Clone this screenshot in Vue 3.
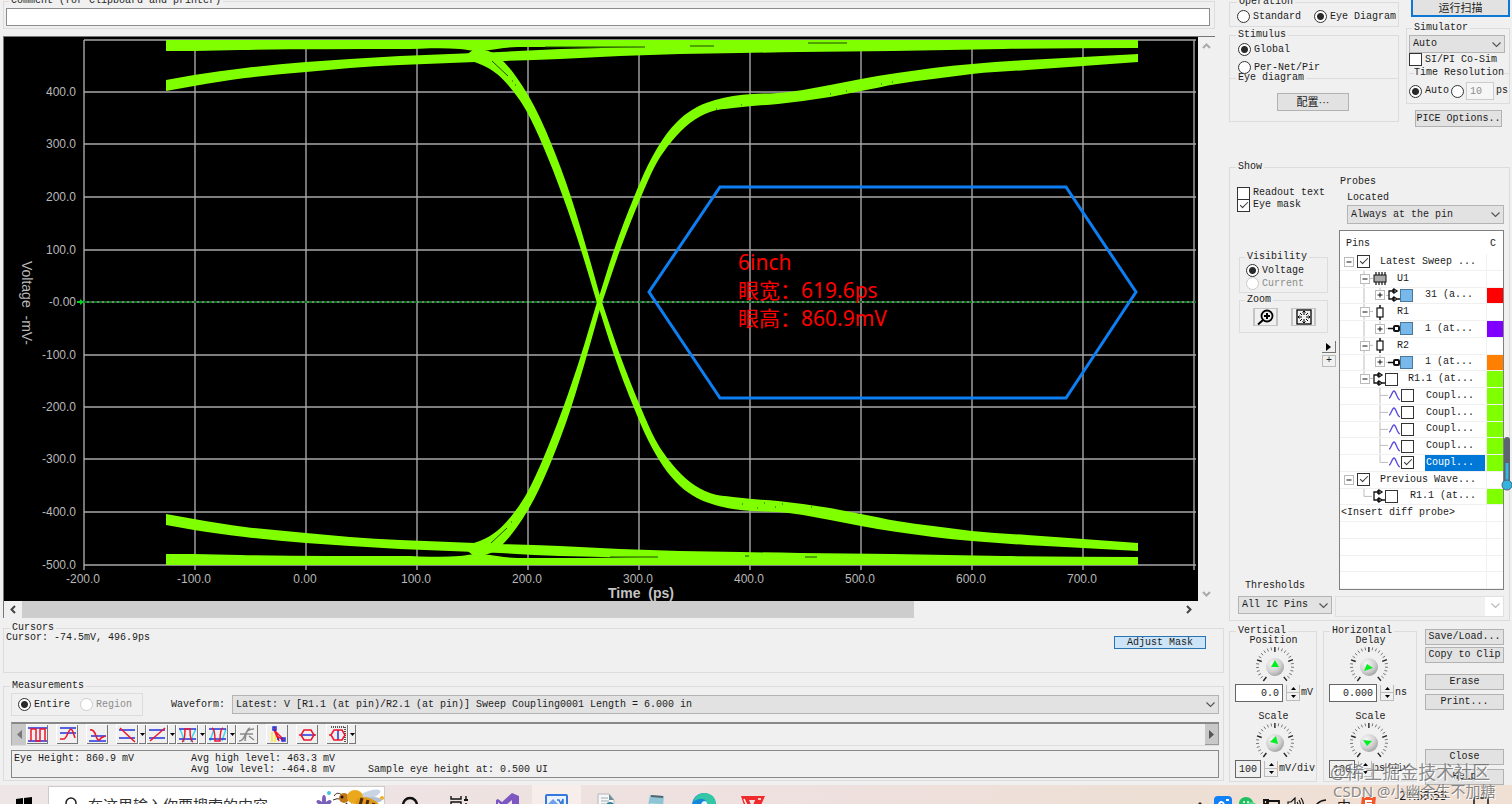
<script setup>
import { ref } from 'vue'

const comment = ref('')
const resolution = ref('10')
const vPos = ref('0.0')
const vScale = ref('100')
const hDelay = ref('0.000')
const hScale = ref('100')

/* ---------- plot ---------- */
const gridX = Array.from({ length: 11 }, (_, i) => 84 + i * 111)
const gridY = [40, 92, 144, 197, 250, 302, 355, 407, 459, 512, 565]
const xLabels = ['-200.0', '-100.0', '0.00', '100.0', '200.0', '300.0', '400.0', '500.0', '600.0', '700.0']
const yLabels = ['400.0', '300.0', '200.0', '100.0', '-0.00', '-100.0', '-200.0', '-300.0', '-400.0', '-500.0']

const mirror = (pts) => pts.map(([x, y]) => [x, 605 - y])

/* cubic Hermite curve through the points, drawn as Bezier segments */
function smooth(pts) {
  const last = pts.length - 1
  const sec = pts.slice(1).map((p, i) => (p[1] - pts[i][1]) / (p[0] - pts[i][0]))
  const slope = pts.map((p, i) => {
    if (i === 0) return sec[0]
    if (i === last) return sec[last - 1]
    const a = Math.abs(p[0] - pts[i - 1][0])
    const b = Math.abs(pts[i + 1][0] - p[0])
    return (sec[i - 1] * b + sec[i] * a) / (a + b)
  })
  let d = ''
  for (let i = 0; i < last; i++) {
    const [x1, y1] = pts[i]
    const [x2, y2] = pts[i + 1]
    const h = (x2 - x1) / 3
    const c = [x1 + h, y1 + h * slope[i], x2 - h, y2 - h * slope[i + 1]].map((n) => n.toFixed(1))
    d += ` C${c[0]} ${c[1]} ${c[2]} ${c[3]} ${x2} ${y2}`
  }
  return d
}
function band(upper, lower) {
  const back = [...lower].reverse()
  return `M${upper[0]}${smooth(upper)} L${back[0]}${smooth(back)} Z`
}

const railUp = [[166, 40], [1138, 40]]
const railLow = [[166, 51], [194, 51], [240, 50], [400, 49], [460, 49], [478, 51], [490, 50], [504, 48], [545, 47], [645, 48], [1000, 48], [1138, 48]]
const settleUp = [[166, 80], [194, 75], [245, 68], [306, 62], [350, 59], [400, 56], [475, 53], [500, 52], [560, 49], [603, 48], [680, 47], [1138, 46]]
const settleLow = [[166, 91], [194, 86], [245, 78], [306, 72], [350, 68], [400, 65], [475, 62], [500, 61], [560, 59], [620, 56], [680, 54], [740, 53], [800, 52], [893, 51], [1003, 49], [1138, 48]]
const fallUp = [[474, 49], [484, 50], [493, 53], [504, 62], [517, 78], [528, 95], [541, 120], [551, 143], [571, 197], [587, 250], [602, 303]]
const fallLow = [[460, 60], [470, 61], [482, 65], [497, 74], [513, 91], [527, 112], [543, 146], [563, 197], [581, 250], [597, 303]]
const riseUp = [[597, 303], [614, 250], [634, 197], [648, 165], [663, 139], [680, 119], [697, 107], [715, 100], [733, 96], [752, 94], [778, 93], [803, 90], [830, 85], [861, 79], [897, 73], [933, 68], [972, 64], [1027, 60], [1083, 57], [1138, 54]]
const riseLow = [[602, 303], [620, 250], [641, 197], [655, 166], [672, 141], [690, 123], [710, 112], [733, 108], [752, 106], [778, 104], [803, 101], [830, 97], [861, 91], [897, 84], [933, 79], [972, 74], [1027, 70], [1083, 66], [1138, 62]]
const pairs = [[railUp, railLow], [settleUp, settleLow], [fallUp, fallLow], [riseUp, riseLow]]
const traces = pairs.flatMap(([u, l]) => [band(u, l), band(mirror(u), mirror(l))])

/* ---------- knobs ---------- */
const ticks = Array.from({ length: 25 }, (_, i) => {
  const a = ((-232 + i * 11.8) * Math.PI) / 180
  const major = i % 6 === 0
  const r1 = major ? 14 : 16
  return [20 + Math.cos(a) * r1, 20 + Math.sin(a) * r1, 20 + Math.cos(a) * 19, 20 + Math.sin(a) * 19, major]
})

/* ---------- probe tree ---------- */
const rows = [
  { lvl: 0, exp: '-', box: 'on', text: 'Latest Sweep ...' },
  { lvl: 1, exp: '-', icon: 'chip', text: 'U1', g: 'M24 0V17 M30 8H33' },
  { lvl: 2, exp: '+', icon: 'buf', box: 'fill', text: '31 (a...', color: '#ff0000', g: 'M24 0V17 M40 0V3 M46 8H49' },
  { lvl: 1, exp: '-', icon: 'res', text: 'R1', g: 'M24 0V17 M30 8H33' },
  { lvl: 2, exp: '+', icon: 'pin', box: 'fill', text: '1 (at...', color: '#8000ff', g: 'M24 0V17 M40 0V3 M46 8H49' },
  { lvl: 1, exp: '-', icon: 'res', text: 'R2', g: 'M24 0V17 M30 8H33' },
  { lvl: 2, exp: '+', icon: 'pin', box: 'fill', text: '1 (at...', color: '#ff8000', g: 'M24 0V17 M40 0V3 M46 8H49' },
  { lvl: 1, exp: '-', icon: 'buf', box: 'off', text: 'R1.1 (at...', color: '#80ff00', g: 'M24 0V4 M30 8H33' },
  ...[0, 1, 2, 3].map(() => ({ lvl: 3, icon: 'wave', box: 'off', text: 'Coupl...', color: '#80ff00', g: 'M40 0V17 M40 8H48' })),
  { lvl: 3, icon: 'wave', box: 'on', text: 'Coupl...', color: '#80ff00', sel: true, g: 'M40 0V8 H48' },
  { lvl: 0, exp: '-', box: 'on', text: 'Previous Wave...' },
  { lvl: 4, icon: 'buf', box: 'off', text: 'R1.1 (at...', color: '#80ff00', g: 'M24 0V8 H32' },
  { lvl: 5, text: '<Insert diff probe>' },
  { lvl: 5, text: '' },
  { lvl: 5, text: '' },
  { lvl: 5, text: '' },
  { lvl: 5, text: '' },
]

/* ---------- measurement tools ---------- */
const B = '#2233dd'
const R = '#f0142c'
const C = '#35d8f5'
const G = '#8a8a8a'
const tools = [
  { name: 'Period', p: [['M0 3H19M0 16H19', B], ['M3 16V4H8V16H12V4H17V16', R]] },
  { name: 'Overshoot', p: [['M2 3H18M2 8H18', B], ['M2 14H6Q8 13 10 8Q13 1 15 7L17 13', R]], gap: true },
  { name: 'Undershoot', p: [['M3 11H18M1 16H18', B], ['M2 5Q6 4 8 11Q10 18 13 13L17 11', R]], gap: true },
  { name: 'Fall time', p: [['M1 5H17M1 13H17', B], ['M2 3L17 17', R]], drop: true, gap: true },
  { name: 'Rise time', p: [['M1 5H17M1 13H17', B], ['M2 16L17 3', R]], drop: true },
  { name: 'Positive pulse', p: [['M2 4Q5 10 6 17M18 4Q14 10 13 17', C], ['M1 4H18M1 14H18', B], ['M4 17Q7 16 7 4H12Q12 16 15 17', R]], drop: true },
  { name: 'Negative pulse', p: [['M2 16L6 4M14 16L18 4', C], ['M1 4H18M1 14H18', B], ['M4 3Q7 4 7 16H12Q12 4 15 3', R]], drop: true },
  { name: 'Crossing', p: [['M1 16Q5 16 7 10T16 4M2 9H15M7 16Q8 4 12 3M11 11L16 15', G]] },
  { name: 'Slope', p: [['M4 17V7M7 17L8 9', '#f5e830'], ['M6 2L11 16L6 5L16 15M9 11L16 16', R], ['M5 2H8V5H5ZM14 13H17V16H14ZM9 14H11', B]], gap: true },
  { name: 'Eye width', p: [['M3 10H17', B], ['M1 10H3L6 5H13L16 10L13 15H6L3 10M16 10H18', R]], gap: true },
  { name: 'Eye height', p: [['M3 2H17V17', '#222', '1 1'], ['M10 5V15', B], ['M1 10H3L6 5H14L17 10L14 15H6L3 10', R]], drop: true, gap: true },
]
</script>

<template>
  <div class="app">
    <main class="main">
      <!-- left side -->
      <section class="left">
        <fieldset class="comment">
          <legend><label for="comment">Comment (for Clipboard and printer)</label></legend>
          <input id="comment" v-model="comment" class="field" type="text" />
        </fieldset>

        <div class="frame">
          <div class="view">
            <svg class="plot" viewBox="4 37 1193 564" preserveAspectRatio="xMinYMin meet" role="img" aria-label="Eye diagram">
              <g stroke="#a8a8a8" stroke-width="1.4">
                <line v-for="x in gridX" :key="'x' + x" :x1="x" :x2="x" y1="40" y2="570" />
                <line v-for="y in gridY" :key="'y' + y" x1="84" x2="1196" :y1="y" :y2="y" />
              </g>
              <line x1="84" x2="1196" y1="302" y2="302" stroke="#0a7a1a" stroke-width="2" stroke-dasharray="3 2" />
              <path d="M77 301H80V299L84 302L80 305V303H77Z" fill="#00d020" />
              <path v-for="(d, i) in traces" :key="i" :d="d" fill="#80ff00" />
              <g stroke="#1d4a00" stroke-width="1" fill="none">
                <path d="M545 47H645M808 43H847M492 61L508 76M512 81h1M515 85h1" />
                <path d="M690 46H714M610 557H658M745 556h4M805 557H817M491 543L507 528M511 522h1" />
                <path d="M742 504h1M757 508h1M764 503h1M775 507h1M782 504h1M811 507h1M830 94h1M846 91h1M881 84h1M892 82h1M716 109h1M741 105h1" />
              </g>
              <polygon points="720,187 1066,187 1136,292 1066,398 720,398 649,292" fill="none" stroke="#0d7ff2" stroke-width="3" />
              <g class="tick">
                <text v-for="(t, i) in yLabels" :key="t" x="76" :y="gridY[i + 1] + 4" text-anchor="end">{{ t }}</text>
                <text v-for="(t, i) in xLabels" :key="t" :x="gridX[i] - 1" y="583" text-anchor="middle">{{ t }}</text>
              </g>
              <text class="axis" x="641" y="598" text-anchor="middle">Time&nbsp; (ps)</text>
              <text class="vaxis" transform="translate(22 303) rotate(90)" text-anchor="middle">Voltage&nbsp; -mV-</text>
              <g class="note">
                <text x="738" y="270">6inch</text>
                <text x="738" y="298">眼宽：619.6ps</text>
                <text x="738" y="326">眼高：860.9mV</text>
              </g>
            </svg>
            <div class="vscroll">
              <svg width="9" height="6" viewBox="0 0 9 6"><path d="M1 5L4.500 1.500L8 5" fill="none" stroke="#aaa" stroke-width="2" /></svg>
              <svg width="9" height="6" viewBox="0 0 9 6"><path d="M1 1L4.500 4.500L8 1" fill="none" stroke="#aaa" stroke-width="2" /></svg>
            </div>
          </div>
          <div class="hscroll">
            <button type="button" aria-label="Scroll left"><svg width="6" height="9" viewBox="0 0 6 9"><path d="M5 1L1.500 4.500L5 8" fill="none" stroke="#444" stroke-width="2" /></svg></button>
            <div class="track"><div class="thumb"></div></div>
            <button type="button" aria-label="Scroll right"><svg width="6" height="9" viewBox="0 0 6 9"><path d="M1 1L4.500 4.500L1 8" fill="none" stroke="#444" stroke-width="2" /></svg></button>
          </div>
        </div>

        <fieldset class="cursors">
          <legend>Cursors</legend>
          <output>Cursor: -74.5mV, 496.9ps</output>
          <button type="button" class="adjust">Adjust Mask</button>
        </fieldset>

        <fieldset class="measure">
          <legend>Measurements</legend>
          <div class="mrow">
            <div class="range">
              <label><input type="radio" name="range" checked /><span>Entire</span></label>
              <label class="dim"><input type="radio" name="range" disabled /><span>Region</span></label>
            </div>
            <label class="wlabel" for="wave">Waveform:</label>
            <span class="sel grow">
              <select id="wave"><option>Latest: V [R1.1 (at pin)/R2.1 (at pin)] Sweep Coupling0001 Length = 6.000 in</option></select>
              <svg width="9" height="6" viewBox="0 0 9 6"><path d="M.5 .5L4.500 4.500L8.500 .5" /></svg>
            </span>
          </div>
          <div class="tools">
            <button type="button" class="end" aria-label="Previous tools"><svg width="5" height="9" viewBox="0 0 5 9"><path d="M5 0V9L0 4.500Z" fill="#777" /></svg></button>
            <div v-for="t in tools" :key="t.name" class="tool" :class="{ gap: t.gap }">
              <button type="button" class="ticon" :aria-label="t.name">
                <svg width="19" height="19" viewBox="0 0 19 19"><path v-for="(q, i) in t.p" :key="i" :d="q[0]" :stroke="q[1]" :stroke-dasharray="q[2]" fill="none" stroke-width="1.500" /></svg>
              </button>
              <button v-if="t.drop" type="button" class="tdrop" :aria-label="t.name + ' options'"><svg width="5" height="3" viewBox="0 0 5 3"><path d="M0 0H5L2.500 3Z" /></svg></button>
            </div>
            <button type="button" class="end last" aria-label="More tools"><svg width="5" height="9" viewBox="0 0 5 9"><path d="M0 0V9L5 4.500Z" fill="#555" /></svg></button>
          </div>
          <div class="result">
            <span class="r1">Eye Height: 860.9 mV</span>
            <span class="r2">Avg high level: 463.3 mV<br />Avg low level: -464.8 mV</span>
            <span class="r3">Sample eye height at: 0.500 UI</span>
          </div>
        </fieldset>
      </section>

      <!-- right side -->
      <aside class="right">
        <div class="topgrid">
          <div class="stack">
            <fieldset class="oper">
              <legend>Operation</legend>
              <label><input type="radio" name="op" /><span>Standard</span></label>
              <label><input type="radio" name="op" checked /><span>Eye Diagram</span></label>
            </fieldset>
            <fieldset class="stim">
              <legend>Stimulus</legend>
              <label><input type="radio" name="stim" checked /><span>Global</span></label>
              <label><input type="radio" name="stim" /><span>Per-Net/Pir</span></label>
              <fieldset class="inner">
                <legend>Eye diagram</legend>
                <button type="button" class="btn conf">配置···</button>
              </fieldset>
            </fieldset>
          </div>
          <div class="stack">
            <button type="button" class="run">运行扫描</button>
            <fieldset class="sim">
              <legend>Simulator</legend>
              <span class="sel">
                <select aria-label="Simulator"><option>Auto</option></select>
                <svg width="9" height="6" viewBox="0 0 9 6"><path d="M.5 .5L4.500 4.500L8.500 .5" /></svg>
              </span>
              <label><input type="checkbox" /><span>SI/PI Co-Sim</span></label>
              <fieldset class="inner tres">
                <legend>Time Resolution</legend>
                <div class="resrow">
                  <label><input type="radio" name="res" checked /><span>Auto</span></label>
                  <input type="radio" name="res" aria-label="Fixed resolution" />
                  <input id="res" v-model="resolution" class="ps" type="text" disabled /><label for="res">ps</label>
                </div>
              </fieldset>
            </fieldset>
            <button type="button" class="btn pice">PICE Options..</button>
          </div>
        </div>

        <div class="showwrap">
          <fieldset class="show">
            <legend>Show</legend>
            <div class="showgrid">
              <div class="scol">
                <label><input type="checkbox" /><span>Readout text</span></label>
                <label><input type="checkbox" checked /><span>Eye mask</span></label>
                <fieldset class="vis">
                  <legend>Visibility</legend>
                  <label><input type="radio" name="vis" checked /><span>Voltage</span></label>
                  <label class="dim"><input type="radio" name="vis" disabled /><span>Current</span></label>
                </fieldset>
                <fieldset class="zoom">
                  <legend>Zoom</legend>
                  <div class="zrow">
                    <button type="button" aria-label="Zoom in">
                      <svg width="18" height="16" viewBox="0 0 18 16" fill="none" stroke="#000"><circle cx="10" cy="7" r="5.500" stroke-width="1.800" /><path d="M7 7H13M10 4V10M6 11L1 15.500" stroke-width="2" /></svg>
                    </button>
                    <button type="button" aria-label="Fit all">
                      <svg width="16" height="16" viewBox="0 0 16 16" fill="none" stroke="#000"><rect x="1" y="1" width="14" height="14" stroke-width="1.300" /><path d="M8 2V6M8 10V14M2 8H6M10 8H14M6.500 3.500L8 2L9.500 3.500M6.500 12.500L8 14L9.500 12.500M3.500 6.500L2 8L3.500 9.500M12.500 6.500L14 8L12.500 9.500M4 4L6 6M12 4L10 6M4 12L6 10M12 12L10 10" /></svg>
                    </button>
                  </div>
                </fieldset>
                <button type="button" class="mini" aria-label="Collapse"><svg width="5" height="8" viewBox="0 0 5 8"><path d="M0 0V8L5 4Z" /></svg></button>
                <button type="button" class="mini flat">+</button>
                <label class="thr" for="thr">Thresholds</label>
              </div>
              <div class="pcol">
                <span class="plabel">Probes</span>
                <label class="located" for="loc">Located</label>
                <span class="sel loc">
                  <select id="loc"><option>Always at the pin</option></select>
                  <svg width="9" height="6" viewBox="0 0 9 6"><path d="M.5 .5L4.500 4.500L8.500 .5" /></svg>
                </span>
                <div class="tree">
                  <div class="thead"><span>Pins</span><span>C</span></div>
                  <div v-for="(r, i) in rows" :key="i" class="trow" :class="'l' + r.lvl">
                    <svg v-if="r.g" class="guides" viewBox="0 0 60 17" preserveAspectRatio="none"><path :d="r.g" fill="none" stroke="#bbb" /></svg>
                    <button v-if="r.exp" type="button" class="exp" :aria-label="'Toggle ' + r.text">
                      <svg width="8" height="8" viewBox="0 0 8 8"><path :d="r.exp === '+' ? 'M1.500 4H6.500M4 1.500V6.500' : 'M1.500 4H6.500'" stroke="#111" /></svg>
                    </button>
                    <svg v-if="r.icon === 'chip'" class="ic" width="14" height="13" viewBox="0 0 14 13"><path d="M3 0V13M6 0V13M9 0V13M12 0V13" stroke="#111" stroke-width="1.200" /><rect x="1" y="3" width="12" height="7" fill="#aaa" stroke="#111" /></svg>
                    <svg v-else-if="r.icon === 'res'" class="ic" width="14" height="15" viewBox="0 0 14 15"><path d="M7 0V15" stroke="#111" stroke-width="1.500" /><rect x="4" y="3" width="6" height="9" fill="#fff" stroke="#111" stroke-width="1.200" /></svg>
                    <svg v-else-if="r.icon === 'pin'" class="ic" width="12" height="9" viewBox="0 0 12 9"><path d="M0 4.500H6" stroke="#111" stroke-width="1.500" /><rect x="6" y="2" width="5" height="5" rx="1" fill="#fff" stroke="#111" stroke-width="2" /></svg>
                    <svg v-else-if="r.icon === 'buf'" class="ic" width="12" height="14" viewBox="0 0 12 14" fill="none" stroke="#111" stroke-width="1.300"><path d="M5 3H1V11H5M6 1V5L9 3ZM6 9V13L9 11ZM9 11H12M5 1V5M5 9V13" /></svg>
                    <svg v-else-if="r.icon === 'wave'" class="ic" width="12" height="11" viewBox="0 0 12 11"><path d="M0 8C2 8 3 1 5 1S8 9 11 10" fill="none" stroke="#5548e0" stroke-width="1.300" /></svg>
                    <input v-if="r.box" type="checkbox" :checked="r.box === 'on'" :class="{ fill: r.box === 'fill' }" :aria-label="r.text" />
                    <span class="tt" :class="{ selected: r.sel }">{{ r.text }}</span>
                    <span class="swatch" :style="r.color ? { background: r.color } : null"></span>
                  </div>
                </div>
              </div>
            </div>
            <div class="thrrow">
              <span class="sel">
                <select id="thr"><option>All IC Pins</option></select>
                <svg width="9" height="6" viewBox="0 0 9 6"><path d="M.5 .5L4.500 4.500L8.500 .5" /></svg>
              </span>
              <span class="sel off">
                <select disabled aria-label="Threshold model"><option></option></select>
                <svg width="9" height="6" viewBox="0 0 9 6"><path d="M.5 .5L4.500 4.500L8.500 .5" /></svg>
              </span>
            </div>
          </fieldset>
        </div>

        <div class="bottom">
          <fieldset v-for="(k, n) in ['Vertical', 'Horizontal']" :key="k" class="dial">
            <legend>{{ k }}</legend>
            <template v-for="m in 2" :key="m">
              <label class="dname" :for="k + m">{{ m === 2 ? 'Scale' : n ? 'Delay' : 'Position' }}</label>
              <svg class="knob" width="40" height="38" viewBox="0 0 40 38">
                <defs>
                  <radialGradient :id="'kg' + n + m" cx=".35" cy=".3" r=".8"><stop offset="0" stop-color="#f6f6f6" /><stop offset=".6" stop-color="#cfcfcf" /><stop offset="1" stop-color="#999" /></radialGradient>
                </defs>
                <line v-for="(t, i) in ticks" :key="i" :x1="t[0]" :y1="t[1]" :x2="t[2]" :y2="t[3]" :stroke="t[4] ? '#222' : '#777'" :stroke-width="t[4] ? 1.4 : 1" />
                <circle cx="20" cy="21" r="9" :fill="`url(#kg${n}${m})`" />
                <path :d="n ? (m === 1 ? 'M18 18L24 22L15 25Z' : 'M14 18L23 19L18 24Z') : (m === 1 ? 'M20 14L24 21H16Z' : 'M21 14L23 22L15 20Z')" fill="#00f020" />
              </svg>
              <div class="num">
                <input v-if="!n && m === 1" :id="k + m" v-model="vPos" class="wide" type="text" />
                <input v-else-if="!n" :id="k + m" v-model="vScale" type="text" readonly />
                <input v-else-if="m === 1" :id="k + m" v-model="hDelay" class="wide" type="text" />
                <input v-else :id="k + m" v-model="hScale" type="text" readonly />
                <span class="spin">
                  <button type="button" aria-label="Increase"><svg width="5" height="3" viewBox="0 0 5 3"><path d="M0 3H5L2.500 0Z" /></svg></button>
                  <button type="button" aria-label="Decrease"><svg width="5" height="3" viewBox="0 0 5 3"><path d="M0 0H5L2.500 3Z" /></svg></button>
                </span>
                <span>{{ n ? (m === 1 ? 'ns' : 'ps/div') : (m === 1 ? 'mV' : 'mV/div') }}</span>
              </div>
            </template>
          </fieldset>
          <div class="actions">
            <button type="button" class="btn">Save/Load...</button>
            <button type="button" class="btn">Copy to Clip</button>
            <button type="button" class="btn sp1">Erase</button>
            <button type="button" class="btn sp2">Print...</button>
            <button type="button" class="btn sp3">Close</button>
            <button type="button" class="btn sp2">Help</button>
          </div>
        </div>
      </aside>
    </main>

    <!-- taskbar -->
    <footer class="taskbar">
      <div class="bar">
        <button type="button" class="start" aria-label="Start"><svg width="16" height="16" viewBox="0 0 16 16"><path d="M0 2L7 1V7.500H0ZM8 1L16 0V7.500H8ZM0 8.500H7V15L0 14ZM8 8.500H16V16L8 15Z" /></svg></button>
        <div class="search">
          <svg width="16" height="18" viewBox="0 0 16 18" fill="none" stroke="#222" stroke-width="1.500"><circle cx="7" cy="7" r="5" /><path d="M4 11L0 16" /></svg>
          <input type="text" placeholder="在这里输入你要搜索的内容" aria-label="Search" />
          <svg class="bee" width="70" height="36" viewBox="0 0 70 36">
            <g fill="#7860b8"><ellipse cx="10" cy="13" rx="2" ry="5" /><ellipse cx="6" cy="16" rx="4" ry="2" transform="rotate(35 6 16)" /><ellipse cx="14" cy="16" rx="4" ry="2" transform="rotate(-35 14 16)" /><circle cx="10" cy="20" r="5" /></g>
            <circle cx="15" cy="6" r="2" fill="#40c8d8" /><circle cx="68" cy="11" r="2" fill="#f0b020" />
            <ellipse cx="55" cy="8" rx="12" ry="4" fill="#c8d4e4" transform="rotate(-20 55 8)" />
            <ellipse cx="59" cy="13" rx="9" ry="3" fill="#b4bfd0" />
            <path d="M20 9Q23 4 28 8M19 13Q23 11 27 12" fill="none" stroke="#443322" />
            <ellipse cx="30" cy="11" rx="5" ry="5" fill="#c07818" /><ellipse cx="41" cy="10" rx="8" ry="7" fill="#eca81c" />
            <ellipse cx="54" cy="18" rx="13" ry="7" fill="#e09a18" transform="rotate(20 54 18)" />
            <path d="M48 11L45 22M54 13L51 25M60 16L57 27" stroke="#4c2a12" stroke-width="3" /><circle cx="28" cy="10" r="1.500" fill="#201008" />
            <path d="M33 16L29 21M38 17L35 22" stroke="#4c2a12" stroke-width="1.500" />
          </svg>
        </div>
        <button type="button" class="task" aria-label="Cortana"><svg width="18" height="18" viewBox="0 0 18 18"><circle cx="9" cy="9" r="7" fill="none" stroke="#111" stroke-width="2.500" /></svg></button>
        <button type="button" class="task" aria-label="Task view"><svg width="18" height="18" viewBox="0 0 18 18" fill="none" stroke="#111" stroke-width="1.400"><path d="M1 0V3H11V0M1 6H11V12H1ZM1 18V15H11V18M16 0V3M16 7V18" /><path d="M14 4H18" stroke-width="2" /></svg></button>
        <button type="button" class="task" aria-label="Visual Studio"><svg width="24" height="24" viewBox="0 0 24 24"><path d="M16 0L23 3V21L16 24L6 15L2 18L0 17V7L2 6L6 9Z" fill="#7d57c2" /><path d="M16 7V17L10 12ZM2 9V15L5 12Z" fill="#efe4e4" /></svg></button>
        <button type="button" class="task on" aria-label="Image viewer"><svg width="23" height="23" viewBox="0 0 23 23"><rect x="1" y="1" width="21" height="21" rx="1" fill="#eaf2ff" stroke="#3478dc" stroke-width="2" /><path d="M3 10L8 5L14 11L11 14H3Z" fill="#6fa0ec" /><path d="M12 6H14L16 10L18 5V11M4 16H20" stroke="#3478dc" stroke-width="1.500" fill="none" /></svg></button>
        <button type="button" class="task" aria-label="Documents"><svg width="22" height="24" viewBox="0 0 22 24"><path d="M3 1H14L19 7V23H3Z" fill="#f6f7f8" stroke="#b0b8bc" /><path d="M6 5H13M6 8H14M6 11H11" stroke="#a4acb0" /><circle cx="15" cy="13" r="4" fill="#2c7f98" /><path d="M14 1V7H19" fill="#6e8e9a" /></svg></button>
        <button type="button" class="task" aria-label="Notes"><svg width="20" height="22" viewBox="0 0 20 22"><path d="M5 1L19 2L17 22H1Z" fill="#8fc4d4" /><path d="M6 2L18 3" stroke="#56656c" stroke-width="2" /><path d="M5 9L16 10L13 20H2Z" fill="#b8dde5" /></svg></button>
        <button type="button" class="task" aria-label="Edge"><svg width="24" height="24" viewBox="0 0 24 24"><circle cx="12" cy="12" r="12" fill="#1487d8" /><path d="M1 9Q4 0 13 0Q23 1 24 10Q23 14 18 14Q14 13 15 10Q13 5 7 6Q3 7 1 9Z" fill="#34c7a5" /><path d="M9 13Q9 8 13 8Q16 9 15 13L17 16Q10 18 9 13Z" fill="#e8f5fb" /></svg></button>
        <button type="button" class="task" aria-label="WPS"><svg width="26" height="20" viewBox="0 0 26 20"><path d="M1 1H18L15 5H9L12 12L17 1H25L17 19H13L10 13L7 19Z" fill="#ef2b2b" /><path d="M4 4L8 13M18 4H21" stroke="#fff" stroke-width="1.500" /></svg></button>

        <div class="tray">
          <span class="t"><svg width="8" height="8" viewBox="0 0 8 8"><path d="M1 5L4 2L7 5" fill="none" stroke="#222" stroke-width="1.500" /></svg></span>
          <span class="t"><svg width="20" height="18" viewBox="0 0 20 18"><rect width="18" height="18" rx="4" fill="#1480f5" /><path d="M4 10Q7 3 10 8M12 4H15M12 9H16" stroke="#fff" stroke-width="2" fill="none" /></svg></span>
          <span class="t"><svg width="18" height="16" viewBox="0 0 18 16"><ellipse cx="7" cy="6" rx="7" ry="6" fill="#20c060" /><ellipse cx="12" cy="10" rx="6" ry="5" fill="#50d884" /><circle cx="5" cy="5" r="1" fill="#fff" /><circle cx="9" cy="5" r="1" fill="#fff" /></svg></span>
          <span class="t"><svg width="18" height="12" viewBox="0 0 18 12"><path d="M4 2H16V10H4ZM0 1H6M1 1V5H5V1" fill="none" stroke="#111" stroke-width="1.800" /></svg></span>
          <span class="t"><svg width="18" height="16" viewBox="0 0 18 16" fill="none" stroke="#111" stroke-width="1.200"><path d="M1 5H4L8 1V15L4 11H1ZM10 5Q12 8 10 11M12 3Q15 8 12 13M14 1Q19 8 14 15" /></svg></span>
          <span class="t"><svg width="16" height="16" viewBox="0 0 16 16" fill="none" stroke="#111" stroke-width="1.500"><path d="M2 13Q4 4 14 3M6 14Q7 9 14 8" /></svg></span>
          <span class="t zh">中</span>
          <span class="t"><svg width="16" height="16" viewBox="0 0 16 16"><path d="M2 0H16L14 16H0Z" fill="#f4552c" /><path d="M12 4H6V7H11V11H4" fill="none" stroke="#fff" stroke-width="2" /></svg></span>
          <time class="clock">21:58:55</time>
          <span class="t note-ic"><svg width="16" height="16" viewBox="0 0 16 16"><path d="M1 1H15V12H10L8 15V12H1Z" fill="none" stroke="#111" stroke-width="1.500" /></svg></span>
        </div>
      </div>
    </footer>

    <!-- floating overlays -->
    <div class="mark">
      <span class="m1">@稀土掘金技术社区</span>
      <span class="m2">CSDN @小幽余生不加糖</span>
    </div>
    <svg class="thermo" width="12" height="56" viewBox="0 0 12 56"><rect x="4" y="1" width="6" height="46" rx="3" fill="#5c6470" /><path d="M7 27V46" stroke="#36b4e0" stroke-width="3" /><circle cx="7" cy="49" r="5" fill="#36b4e0" stroke="#4c6474" /></svg>
  </div>
</template>

<style>
html,
body {
  margin: 0;
  background: #f0f0f0;
}
</style>

<style scoped>
.app {
  position: relative;
  display: flex;
  flex-direction: column;
  height: 100vh;
  min-height: 720px;
  overflow: hidden;
  background: #f0f0f0;
  color: #1c1c1c;
  font: 10px/10px "Liberation Mono", "Noto Sans CJK SC", monospace;
}
.app *,
.app *::before {
  box-sizing: border-box;
}
button,
input,
select {
  margin: 0;
  padding: 0;
  font: inherit;
  color: inherit;
  border-radius: 0;
}
svg {
  display: block;
  flex: none;
}
fieldset {
  margin: 0;
  padding: 0;
  min-width: 0;
  border: 1px solid #dcdcdc;
}
legend {
  margin-left: 6px;
  padding: 0 2px;
  height: 10px;
  white-space: nowrap;
}
label {
  display: flex;
  align-items: center;
  gap: 3px;
  white-space: nowrap;
}
legend label {
  display: inline;
}
.dim {
  color: #8d8d8d;
}
input[type="radio"],
input[type="checkbox"] {
  appearance: none;
  flex: none;
  width: 13px;
  height: 13px;
  border: 1px solid #333;
  background: #fff;
}
input[type="radio"] {
  border-radius: 50%;
}
input[type="radio"]:checked {
  background: radial-gradient(circle, #2a2a2a 0 3px, #fff 4px);
}
input[type="radio"]:disabled {
  border-color: #ccc;
}
input[type="checkbox"] {
  display: grid;
  place-items: center;
}
input[type="checkbox"]:checked::before {
  content: "";
  width: 8px;
  height: 4px;
  margin-top: -3px;
  border: solid #333;
  border-width: 0 0 1px 1px;
  transform: rotate(-45deg);
}
input[type="checkbox"].fill {
  background: #78b8ea;
  border-color: #47789c;
}
.sel {
  position: relative;
  display: block;
}
.sel select {
  appearance: none;
  display: block;
  width: 100%;
  height: 18px;
  padding: 0 16px 0 3px;
  border: 1px solid #b4b4b4;
  background: #e2e2e2;
  line-height: 14px;
  opacity: 1;
}
.sel svg {
  position: absolute;
  right: 4px;
  top: 7px;
  fill: none;
  stroke: #555;
  stroke-width: 1.2;
  pointer-events: none;
}
.btn {
  height: 16px;
  border: 1px solid #b2b2b2;
  background: #e2e2e2;
  text-align: center;
  white-space: nowrap;
}
.main {
  flex: 1;
  min-height: 0;
  display: grid;
  grid-template-columns: minmax(0, 1fr) 281px;
  column-gap: 5px;
  padding: 0 2px 0 3px;
}

/* left side */
.left {
  display: flex;
  flex-direction: column;
  min-height: 0;
  padding-bottom: 4px;
}
.comment {
  margin: -4px 9px 7px 0;
  padding: 2px 4px 2px 2px;
}
.comment legend {
  margin-left: 3px;
}
.field {
  display: block;
  width: 100%;
  height: 18px;
  padding: 0 4px;
  border: 1px solid #8c8c8c;
  background: #fff;
}
.frame {
  flex: 1;
  min-height: 0;
  display: flex;
  flex-direction: column;
  margin: 0 9px 5px 0;
  border-top: 1px solid #777;
  border-left: 1px solid #777;
}
.view {
  flex: 1;
  min-height: 0;
  display: flex;
}
.plot {
  flex: 1;
  min-width: 0;
  width: 100%;
  height: 100%;
  background: #000;
}
.tick {
  font: 12px "Liberation Sans", sans-serif;
  fill: #b8b8b8;
}
.axis {
  font: bold 14px "Liberation Sans", sans-serif;
  fill: #c4c4c4;
}
.vaxis {
  font: 14px "Liberation Sans", sans-serif;
  fill: #b8b8b8;
}
.note {
  font: 21px "Noto Sans", "Noto Sans CJK SC", sans-serif;
  fill: #f00;
}
.vscroll {
  flex: none;
  width: 17px;
  display: flex;
  flex-direction: column;
  align-items: center;
  justify-content: space-between;
  padding: 6px 0 4px;
}
.hscroll {
  flex: none;
  height: 17px;
  display: flex;
  margin-right: 17px;
}
.hscroll button {
  width: 18px;
  border: 0;
  background: #f0f0f0;
  display: grid;
  place-items: center;
}
.track {
  flex: 1;
}
.thumb {
  width: 77%;
  height: 100%;
  background: #cdcdcd;
}
.cursors {
  height: 50px;
  margin-bottom: 8px;
  padding: 0 17px 0 2px;
}
.cursors legend {
  margin-left: 4px;
}
.cursors output {
  float: left;
}
.adjust {
  float: right;
  width: 92px;
  height: 13px;
  margin-top: 3px;
  border: 1px solid #2a74b4;
  background: #cce4f7;
  line-height: 10px;
}
.measure {
  padding: 2px 4px 2px 7px;
}
.measure legend {
  margin-left: -1px;
}
.mrow {
  display: flex;
  align-items: center;
  margin-bottom: 6px;
}
.range {
  display: flex;
  align-items: center;
  gap: 10px;
  width: 132px;
  height: 23px;
  padding-left: 6px;
  border: 1px solid #dcdcdc;
}
.wlabel {
  width: 89px;
  padding-left: 28px;
}
.grow {
  flex: 1;
}
.grow select {
  height: 19px;
}
.tools {
  display: flex;
  height: 24px;
  border-top: 2px solid #888;
  border-left: 1px solid #aaa;
  border-bottom: 1px solid #ddd;
}
.end {
  width: 14px;
  border: 0;
  background: #c8c8c8;
  display: grid;
  place-items: center;
}
.last {
  margin-left: auto;
  border-right: 1px solid #999;
  border-bottom: 1px solid #999;
}
.tool {
  display: flex;
  height: 20px;
}
.tool.gap {
  margin-left: 8px;
}
.ticon,
.tdrop {
  height: 20px;
  border: solid #fff;
  border-width: 1px 0 0 1px;
  background: #f0f0f0;
  box-shadow: inset -1px -1px #777;
  display: grid;
  place-items: center;
}
.ticon {
  width: 22px;
}
.tdrop {
  width: 8px;
}
.result {
  display: flex;
  height: 28px;
  margin-top: 4px;
  padding: 2px 2px;
  border: 1px solid #888;
  line-height: 11px;
  white-space: nowrap;
}
.r1 {
  width: 177px;
}
.r2 {
  width: 177px;
}
.r3 {
  align-self: flex-end;
}

/* right side */
.right {
  display: flex;
  flex-direction: column;
  min-height: 0;
}
.topgrid {
  display: grid;
  grid-template-columns: 170px minmax(0, 1fr);
  column-gap: 7px;
  margin-bottom: 35px;
}
.stack {
  display: flex;
  flex-direction: column;
}
.oper {
  margin-top: -3px;
  margin-bottom: 3px;
  padding: 3px 0 3px 7px;
}
.oper legend {
  margin-left: 0;
}
.oper label {
  float: left;
  margin-right: 13px;
}
.oper label + label {
  margin-right: 0;
}
.stim {
  padding-top: 3px;
}
.stim > label {
  margin: 0 0 5px 8px;
}
.inner {
  border-width: 1px 0 0;
}
.stim .inner {
  margin-top: -6px;
  padding: 10px 0;
}
.conf {
  display: block;
  width: 72px;
  height: 18px;
  margin-left: 47px;
  font: 11px/14px "Liberation Sans", "Noto Sans CJK SC", sans-serif;
}
.run {
  height: 23px;
  margin: -6px 0 6px 5px;
  border: 2px solid #0a78d4;
  background: #e2e2e2;
  font: 11px/16px "Noto Sans CJK SC", sans-serif;
  padding-top: 2px;
}
.sim {
  padding: 2px 0 3px 2px;
}
.sim > legend {
  margin-left: 3px;
}
.sim > .sel {
  margin-right: 4px;
}
.tres {
  margin-top: 2px;
}
.tres legend {
  margin-left: 5px;
  padding: 0;
}
.resrow {
  display: flex;
  align-items: center;
  gap: 2px;
  padding-top: 4px;
}
.ps {
  width: 28px;
  height: 18px;
  padding: 0 3px;
  border: 1px solid #ccc;
  background: #f6f6f6;
  color: #8d8d8d;
}
.pice {
  width: 87px;
  height: 17px;
  margin: 6px 0 0 9px;
}
.showwrap {
  flex: 1;
  min-height: 0;
  margin-bottom: 5px;
}
.show {
  height: 100%;
  padding: 4px 5px 2px 7px;
}
.show > legend {
  margin-left: -1px;
}
.showgrid {
  display: grid;
  grid-template-columns: 99px minmax(0, 1fr);
  column-gap: 3px;
  height: calc(100% - 22px);
}
.scol {
  display: flex;
  flex-direction: column;
  padding-top: 11px;
}
.scol > label {
  height: 12px;
}
.vis {
  margin: 41px 8px 2px 2px;
  padding: 2px 0 2px 6px;
}
.vis legend {
  margin-left: -1px;
}
.zoom {
  margin: 0 8px 8px 2px;
  padding: 3px 0 6px 5px;
}
.zoom legend {
  margin-left: 0;
}
.zrow {
  display: flex;
  gap: 13px;
  padding-left: 8px;
}
.zrow button {
  width: 25px;
  height: 18px;
  border: solid #c4c4c4;
  border-width: 1px 2px;
  background: #f0f0f0;
  display: grid;
  place-items: center;
}
.mini {
  align-self: flex-end;
  width: 14px;
  height: 12px;
  margin: 0 0 2px 0;
  border: solid #777;
  border-width: 0 1px 1px 0;
  background: #f0f0f0;
  display: grid;
  place-items: center;
}
.mini.flat {
  border: 1px solid #bbb;
  line-height: 8px;
}
.scol > .thr {
  margin: auto 0 4px 8px;
}
.pcol {
  display: flex;
  flex-direction: column;
  min-height: 0;
}
.plabel {
  margin: 1px 0 6px 1px;
}
.located {
  margin: 0 0 2px 8px;
}
.loc {
  margin: 0 0 6px 8px;
}
.loc select {
  height: 19px;
}
.tree {
  flex: 1;
  min-height: 0;
  display: flex;
  flex-direction: column;
  margin-bottom: 6px;
  border: 1px solid #808080;
  background: #fff;
}
.thead {
  flex: none;
  display: flex;
  justify-content: space-between;
  height: 23px;
  padding: 8px 7px 0 6px;
}
.trow {
  position: relative;
  flex: 1;
  min-height: 0;
  display: flex;
  align-items: center;
  border-bottom: 1px solid #f0f0f0;
}
.guides {
  position: absolute;
  left: 0;
  top: 0;
  width: 60px;
  height: 100%;
}
.exp {
  position: relative;
  flex: none;
  width: 10px;
  height: 10px;
  margin-right: 3px;
  border: 1px solid #bbb;
  background: #fff;
}
.ic {
  position: relative;
}
.l0 {
  padding-left: 4px;
}
.l1 {
  padding-left: 20px;
}
.l2 {
  padding-left: 35px;
}
.l3 {
  padding-left: 49px;
}
.l4 {
  padding-left: 33px;
}
.tt {
  flex: 1;
  align-self: stretch;
  display: flex;
  align-items: center;
  margin-left: 9px;
  padding-left: 1px;
  white-space: nowrap;
  overflow: hidden;
}
.l5 .tt {
  margin-left: 0;
}
.l2 .tt,
.l3 .tt,
.l4 .tt {
  margin-left: 11px;
}
.selected {
  background: #0078d7;
  color: #fff;
}
.swatch {
  flex: none;
  align-self: stretch;
  width: 17px;
  margin-left: 1px;
  border-left: 1px solid #f0f0f0;
}
.thrrow {
  display: grid;
  grid-template-columns: 94px minmax(0, 1fr);
  column-gap: 3px;
  padding-left: 1px;
}
.off select {
  height: 21px;
  background: linear-gradient(90deg, #f0f0f0 calc(100% - 18px), #fff 0);
  border-color: #e0e0e0;
}
.off svg {
  stroke: #bbb;
}
.bottom {
  flex: none;
  display: grid;
  grid-template-columns: 88px 94px minmax(0, 1fr);
  column-gap: 6px;
  align-items: start;
}
.dial {
  height: 156px;
  padding: 0 0 0 5px;
}
.dial legend {
  margin-left: 1px;
}
.dname {
  justify-content: center;
  padding-right: 4px;
}
.num + .dname {
  margin-top: 10px;
}
.knob {
  margin: 0 0 0 20px;
}
.num {
  display: flex;
  align-items: center;
  height: 18px;
}
.num input {
  width: 26px;
  height: 18px;
  padding: 0 3px;
  border: 1px solid #666;
  background: #f0f0f0;
  text-align: right;
}
.num .wide {
  width: 48px;
  background: #fff;
}
.spin {
  flex: none;
  width: 14px;
  margin: 0 1px 0 3px;
}
.spin button {
  width: 14px;
  height: 8px;
  border: solid #bbb;
  border-width: 0 1px 1px;
  background: #f0f0f0;
  display: grid;
  place-items: center;
}
.actions {
  display: flex;
  flex-direction: column;
  gap: 2px;
  padding: 3px 6px 0 2px;
}
.sp1 {
  margin-top: 9px;
}
.sp2 {
  margin-top: 2px;
}
.sp3 {
  margin-top: 37px;
}

/* taskbar */
.taskbar {
  flex: none;
  height: 19px;
  overflow: hidden;
  background: linear-gradient(90deg, #eee6e6, #eee0de 55%, #eedfd5 75%, #f0e0d4);
}
.bar {
  display: flex;
  align-items: center;
  height: 40px;
}
.start,
.task {
  border: 0;
  background: none;
  display: grid;
  place-items: center;
  height: 40px;
}
.start {
  width: 48px;
}
.task {
  width: 49px;
}
.on {
  background: #f7eeec;
}
.search {
  display: flex;
  align-items: center;
  width: 337px;
  height: 38px;
  padding-left: 15px;
  border: 1px solid #ccc;
  background: #fff;
}
.search input {
  flex: 1;
  min-width: 0;
  margin-left: 8px;
  border: 0;
  background: none;
  font: 15px/20px "Noto Sans CJK SC", sans-serif;
}
.search input::placeholder {
  color: #333;
  opacity: 1;
}
.tray {
  display: flex;
  align-items: center;
  height: 40px;
  margin-left: auto;
  padding-right: 16px;
}
.t {
  display: grid;
  place-items: center;
  width: 24px;
}
.zh {
  font: 14px/16px "Noto Sans CJK SC", sans-serif;
}
.clock {
  width: 86px;
  padding-bottom: 18px;
  text-align: center;
  font: 12px/14px "Noto Sans", sans-serif;
}
.note-ic {
  width: 30px;
}

/* overlays */
.mark {
  position: absolute;
  right: 12px;
  bottom: 4px;
  display: flex;
  flex-direction: column;
  width: 170px;
  color: rgba(100, 100, 100, 0.75);
  text-shadow: 1px 1px #fff;
  white-space: nowrap;
  pointer-events: none;
}
.m1 {
  font: 18px/20px "Noto Sans", "Noto Sans CJK SC", sans-serif;
}
.m2 {
  padding-left: 3px;
  font: 15px/18px "Noto Sans", "Noto Sans CJK SC", sans-serif;
}
.thermo {
  position: absolute;
  right: 0;
  top: 436px;
}
</style>
